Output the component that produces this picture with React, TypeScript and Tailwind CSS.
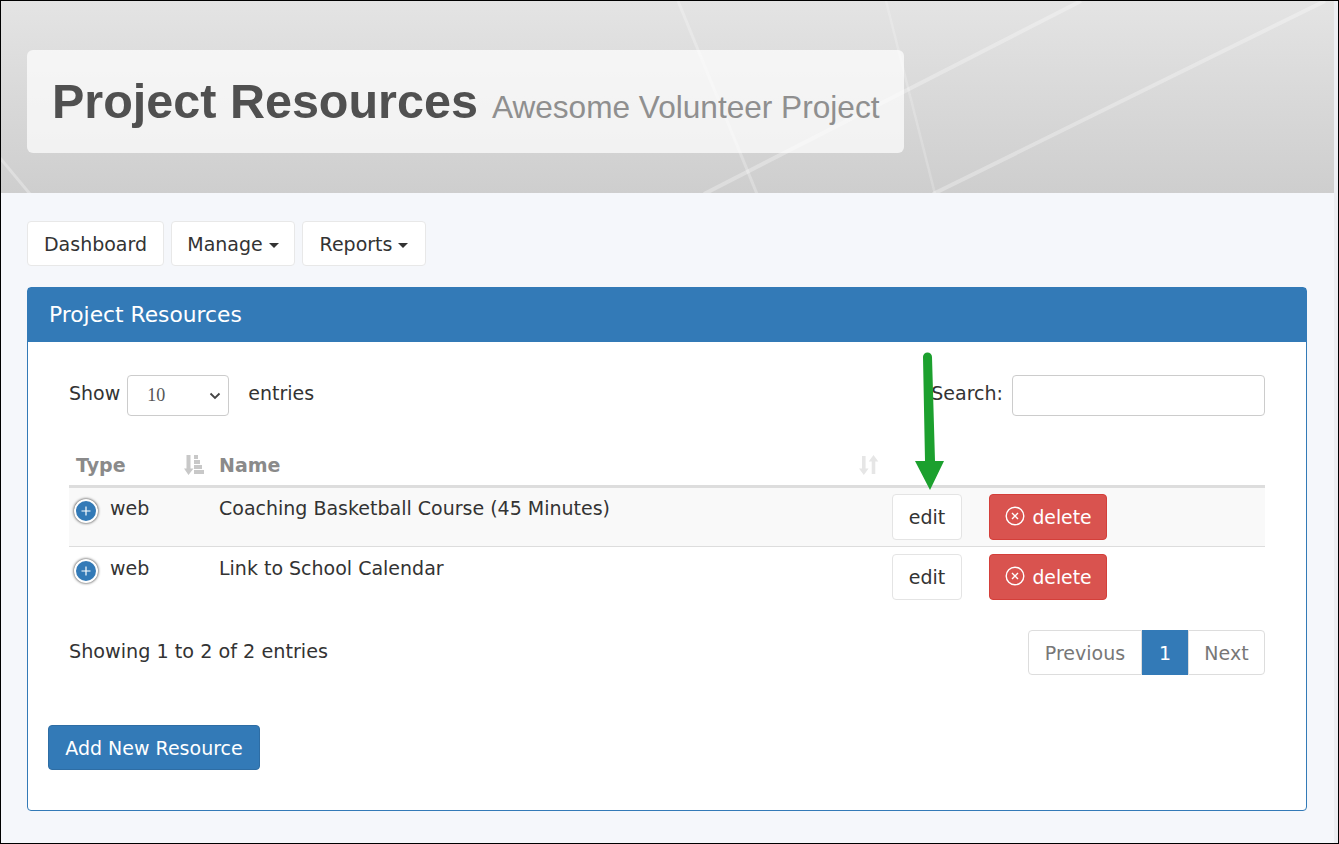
import React from "react";

const body = "[font-family:'DejaVu_Sans',sans-serif]";

function Caret() {
  return <span className="ml-[6px] inline-block align-middle border-x-[5px] border-t-[5px] border-x-transparent border-t-[#333]" />;
}

function SortBoth() {
  return (
    <svg width="20" height="20" viewBox="0 0 20 20" className="text-[#e6e6e6]" fill="currentColor">
      <path d="M3 1h3.6v12.5h3L4.8 20 0 13.5h3z" />
      <path d="M14.5 0l4.8 6.5h-3V19h-3.6V6.5h-3z" />
    </svg>
  );
}

function SortAsc() {
  return (
    <svg width="20" height="20" viewBox="0 0 20 20" className="text-[#c8c8c8]" fill="currentColor">
      <path d="M2.5 0h4v13.5h3L4.5 20 0 13.5h2.5z" />
      <rect x="10" y="0" width="4" height="4" />
      <rect x="10" y="5" width="6" height="4" />
      <rect x="10" y="10" width="8" height="4" />
      <rect x="10" y="15" width="10" height="4" />
    </svg>
  );
}

function Plus() {
  return (
    <span className="flex h-[24px] w-[24px] items-center justify-center rounded-full border-2 border-white bg-[#337ab7] shadow-[0_0_3px_#222]">
      <svg width="12" height="12" viewBox="0 0 12 12" stroke="white" strokeWidth="1.2">
        <path d="M6 1.5v9M1.5 6h9" />
      </svg>
    </span>
  );
}

function Row({ name, striped }: { name: string; striped?: boolean }) {
  return (
    <div className={striped ? "flow-root h-[59px] border-b border-[#dddddd] bg-[#f9f9f9]" : "flow-root h-[60px] bg-white"}>
      <div className={striped ? "-mt-[1px] flex" : "flex"}>
        <div className="flex w-[150px] pl-[5px] pt-[9px]">
          <span className="mt-[3px]"><Plus /></span>
          <span className="ml-[12px] leading-[24px]">web</span>
        </div>
        <div className="w-[673px] pt-[9px] leading-[24px]">{name}</div>
        <div className="pt-[7px]">
          <button className="h-[46px] w-[70px] rounded-[4px] border border-[#e4e4e4] bg-white text-[#333]">edit</button>
        </div>
        <div className="ml-[27px] pt-[7px]">
          <button className="flex h-[46px] w-[118px] items-center justify-center gap-[7px] rounded-[4px] border border-[#d43f3a] bg-[#d9534f] pl-[1px] text-[18.8px] text-white">
            <svg className="-mt-[2px]" width="20" height="20" viewBox="0 0 20 20" fill="none" stroke="white" strokeWidth="1.4">
              <circle cx="10" cy="10" r="8.8" />
              <path d="M7 7l6 6M13 7l-6 6" />
            </svg>
            <span className="pt-[2px]">delete</span>
          </button>
        </div>
      </div>
    </div>
  );
}

export default function App() {
  return (
    <div className={`h-[844px] w-[1339px] overflow-hidden border border-black bg-[#eceef2] text-[19px] text-[#333] ${body}`}>
      <div className="relative h-[842px] w-[1333px] bg-[#f5f7fb]">
        <header className="relative h-[192px] overflow-hidden bg-gradient-to-b from-[#e4e4e4] to-[#cecece] pl-[26px] pt-[49px]">
          <svg className="absolute inset-0" width="1333" height="192" fill="none" stroke="white">
            <path d="M703 193L1080 0" strokeWidth="4" strokeOpacity="0.3" />
            <path d="M932 193L1324 0" strokeWidth="4" strokeOpacity="0.3" />
            <path d="M677 0L756 193" strokeWidth="3" strokeOpacity="0.25" />
            <path d="M885 0L934 193" strokeWidth="2.5" strokeOpacity="0.2" />
            <path d="M-1 157L29 193" strokeWidth="3" strokeOpacity="0.3" />
          </svg>
          <div className="relative flex h-[103px] w-[877px] items-center rounded-[6px] bg-white/70 pl-[25px] font-['Liberation_Sans',sans-serif]">
            <h1 className="text-[48.5px] font-bold leading-none text-[#505050]">Project Resources</h1>
            <span className="ml-[14px] mt-[12px] text-[31.6px] leading-none text-[#8f8f8f]">Awesome Volunteer Project</span>
          </div>
        </header>

        <main className="px-[26px] pt-[28px]">
          <nav className="flex gap-[7px]">
            <button className="h-[45px] w-[137px] rounded-[4px] border border-[#e8e8e8] bg-white pt-[1px]">Dashboard</button>
            <button className="h-[45px] w-[124px] rounded-[4px] border border-[#e8e8e8] bg-white pt-[1px]">Manage<Caret /></button>
            <button className="h-[45px] w-[124px] rounded-[4px] border border-[#e8e8e8] bg-white pt-[1px]">Reports<Caret /></button>
          </nav>

          <section className="mt-[21px] h-[524px] w-[1280px] rounded-[4px] border border-[#337ab7] bg-white">
            <div className="flex h-[54px] items-center bg-[#337ab7] pl-[21px] text-[21.8px] text-white">Project Resources</div>
            <div className="px-[41px]">
              <div className="mt-[33px] flex h-[41px] items-center justify-between">
                <div className="flex items-center">
                  <span className="-mt-[5px]">Show</span>
                  <span className="relative ml-[7px] flex h-[41px] w-[102px] items-center rounded-[4px] border border-[#cccccc] pl-[19px] font-['Liberation_Serif',serif] text-[18px] text-[#555]">
                    10
                    <svg className="absolute right-[6px] top-[13px]" width="14" height="14" viewBox="0 0 14 14" fill="none" stroke="#444" strokeWidth="1.8"><path d="M2.5 4.5L7 9l4.5-4.5" /></svg>
                  </span>
                  <span className="-mt-[5px] ml-[19px]">entries</span>
                </div>
                <div className="flex items-center">
                  <span className="-mt-[5px]">Search:</span>
                  <span className="ml-[9px] h-[41px] w-[253px] rounded-[4px] border border-[#cccccc] bg-white" />
                </div>
              </div>

              <div className="mt-[29px] flex h-[43px] items-center border-b-[3px] border-[#dddddd] font-bold text-[#8a8a8a]">
                <div className="flex w-[150px] items-center justify-between pl-[7px] pr-[15px]"><span>Type</span><SortAsc /></div>
                <div className="flex w-[660px] items-center justify-between"><span>Name</span><SortBoth /></div>
              </div>
              <Row striped name="Coaching Basketball Course (45 Minutes)" />
              <Row name="Link to School Calendar" />

              <div className="mt-[23px] flex items-center justify-between">
                <span className="text-[19.2px]">Showing 1 to 2 of 2 entries</span>
                <div className="flex h-[45px] text-[#777]">
                  <span className="flex w-[114px] items-center justify-center rounded-l-[4px] border border-[#dddddd] pt-[1px]">Previous</span>
                  <span className="flex w-[46px] items-center justify-center bg-[#337ab7] pt-[1px] text-white">1</span>
                  <span className="flex w-[77px] items-center justify-center rounded-r-[4px] border border-[#dddddd] pt-[1px]">Next</span>
                </div>
              </div>
            </div>
            <button className="ml-[20px] mt-[50px] h-[45px] w-[212px] rounded-[4px] border border-[#2e6da4] bg-[#337ab7] pt-[1px] text-white">Add New Resource</button>
          </section>
        </main>

        <svg className="absolute left-[904px] top-[344px]" width="50" height="150" viewBox="0 0 50 150" fill="#1ca02e">
          <path d="M18 12a4.5 4.5 0 0 1 9 0L30 116h9L25 145 10 116h10z" />
        </svg>
      </div>
    </div>
  );
}
